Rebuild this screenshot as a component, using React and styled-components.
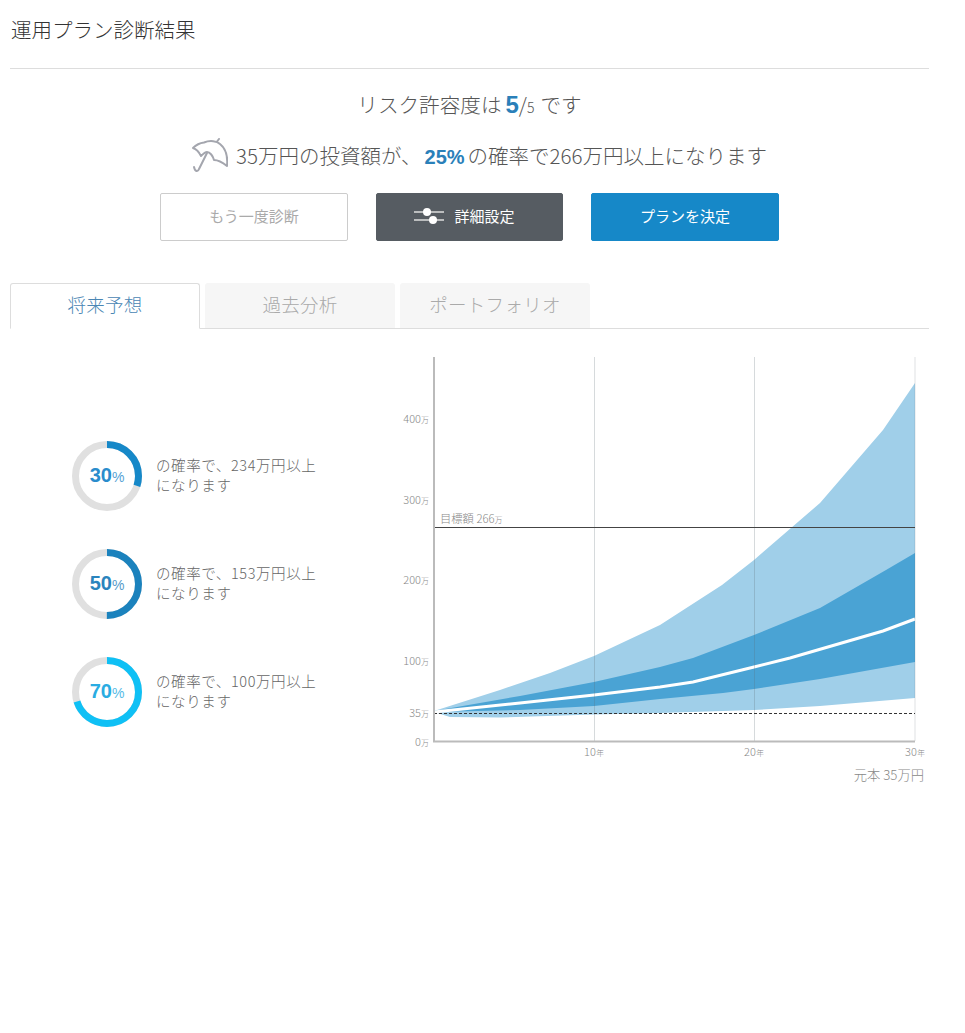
import React from 'react'
import styled, { createGlobalStyle } from 'styled-components'

const GlobalStyle = createGlobalStyle`
    body {
        margin: 0;
        background: #fff;
        font-family: 'Noto Sans CJK JP', 'Noto Sans', sans-serif;
        font-weight: 300;
        color: #555;
    }
`

const Page = styled.div`
    width: 919px;
    height: 1033px;
    margin-left: 10px;
`

const Title = styled.h1`
    height: 69px;
    margin: 0;
    padding: 16px 0 0 1px;
    box-sizing: border-box;
    border-bottom: 1px solid #ddd;
    font-size: 20.5px;
    line-height: 26px;
    font-weight: 300;
    color: #333;
`

const Lead = styled.p`
    margin: 0;
    height: ${props => props.height}px;
    padding-left: ${props => props.indent || 0}px;
    line-height: ${props => props.height}px;
    font-size: ${props => props.size}px;
    text-align: center;
    color: #555;
    white-space: pre;
`

const Strong = styled.strong`
    margin: 0 ${props => props.gap}px;
    font-family: 'Liberation Sans', sans-serif;
    font-size: ${props => props.size}px;
    font-weight: 700;
    color: #2a80b9;
`

const Slash = styled.span`
    margin-left: -4px;
`

const Small = styled.span`
    margin-right: 6px;
    font-size: 14px;
`

const Umbrella = styled.svg`
    width: 38px;
    height: 38px;
    margin: -3px 8px 0 0;
    vertical-align: middle;
    fill: none;
    stroke: #a4a6ae;
    stroke-width: 2;
    stroke-linecap: round;
    stroke-linejoin: round;
`

const Buttons = styled.div`
    display: flex;
    justify-content: center;
    gap: 28px;
    margin: 23px 0 42px;
`

const Button = styled.button`
    display: flex;
    align-items: center;
    justify-content: center;
    gap: 10px;
    width: ${props => props.width || 188}px;
    height: 48px;
    padding: 0 ${props => props.shift || 0}px 3px 0;
    font-family: inherit;
    font-size: 15px;
    font-weight: 400;
    border-radius: 2px;
    border: 1px solid ${props => props.border};
    background: ${props => props.bg};
    color: ${props => props.color};
`

const Tabs = styled.div`
    display: flex;
    gap: 5px;
    height: 45px;
    border-bottom: 1px solid #ddd;
`

const Tab = styled.div`
    width: 190px;
    height: ${props => (props.active ? '46px' : '45px')};
    box-sizing: border-box;
    display: flex;
    align-items: center;
    justify-content: center;
    padding-bottom: 4px;
    font-size: 18.5px;
    letter-spacing: 0.3px;
    border-radius: 3px 3px 0 0;
    color: ${props => (props.active ? '#4a86b4' : '#aaa')};
    background: ${props => (props.active ? '#fff' : '#f6f6f6')};
    border: ${props => (props.active ? '1px solid #ddd' : 'none')};
    border-bottom: ${props => (props.active ? '1px solid #fff' : 'none')};
    position: relative;
`

const Body = styled.div`
    display: flex;
    padding-top: 24px;
`

const Odds = styled.div`
    display: flex;
    flex-direction: column;
    gap: 38px;
    width: 360px;
    padding: 88px 0 0 62px;
    box-sizing: border-box;
`

const OddsRow = styled.div`
    display: flex;
    align-items: center;
    gap: 14px;
`

const Ring = styled.div`
    position: relative;
    width: 70px;
    height: 70px;
`

const RingValue = styled.div`
    position: absolute;
    inset: 0;
    display: flex;
    align-items: center;
    justify-content: center;
    padding-bottom: 2px;
    font-family: 'Liberation Sans', sans-serif;
    font-size: 20px;
    font-weight: 700;
    color: ${props => props.color};
    span {
        font-size: 14px;
        font-weight: 400;
        margin-top: 3px;
        opacity: 0.8;
    }
`

const OddsText = styled.div`
    margin-top: -2px;
    font-size: 14.5px;
    line-height: 20px;
    letter-spacing: 0.6px;
    color: #666;
    white-space: nowrap;
`

const Chart = styled.svg`
    display: block;
    width: 559px;
    height: 450px;
    text {
        font-family: 'Noto Sans CJK JP', sans-serif;
        font-weight: 300;
        fill: #888;
    }
`

const odds = [
    { pct: 30, amount: 234, color: '#1688c8', text: '#2a8ccc' },
    { pct: 50, amount: 153, color: '#1b82bd', text: '#2a84bd' },
    { pct: 70, amount: 100, color: '#0fc0f5', text: '#2aace2' },
]

// chart coordinates are page pixels shifted by the svg origin
const ox = 370
const oy = 353
const pts = list => list.map(([x, y]) => `${x - ox},${y - oy}`).join(' ')

const outerTop = [[434, 711], [500, 690], [550, 673], [594, 656], [660, 625], [722, 585], [754, 560], [820, 503], [883, 430], [915, 383]]
const innerTop = [[434, 711], [520, 696], [594, 682], [660, 667], [693, 658], [754, 635], [820, 608], [886, 570], [915, 553]]
const median = [[434, 712], [520, 703], [594, 695], [660, 687], [693, 682], [754, 667], [790, 658], [883, 631], [915, 619]]
const innerBottom = [[434, 712], [520, 710], [594, 706], [660, 699], [723, 693], [754, 689], [820, 679], [915, 662]]
const outerBottom = [[434, 712], [450, 717], [500, 717.5], [594, 714.5], [660, 713], [754, 710], [820, 706], [915, 698]]

const yLabels = [
    { v: '400', y: 423 },
    { v: '300', y: 504 },
    { v: '200', y: 584 },
    { v: '100', y: 665 },
    { v: '35', y: 717 },
    { v: '0', y: 746 },
]

const xLabels = [
    { v: '10', x: 594 },
    { v: '20', x: 754 },
    { v: '30', x: 915 },
]

const DonutSvg = ({ pct, color }) => {
    const r = 31.5
    const c = 2 * Math.PI * r
    return (
        <svg width="70" height="70" viewBox="0 0 70 70">
            <circle cx="35" cy="35" r={r} fill="none" stroke="#e0e0e0" strokeWidth="7" />
            <circle
                cx="35"
                cy="35"
                r={r}
                fill="none"
                stroke={color}
                strokeWidth="7"
                strokeDasharray={`${(c * pct) / 100} ${c}`}
                transform="rotate(-90 35 35)"
            />
        </svg>
    )
}

const ForecastChart = () => (
    <Chart viewBox="0 0 559 450">
        <polygon points={pts([...outerTop, ...[...outerBottom].reverse()])} fill="#a0cfe9" />
        <polygon points={pts([...innerTop, ...[...innerBottom].reverse()])} fill="#4aa3d4" />
        <polyline points={pts(median)} fill="none" stroke="#fff" strokeWidth="3" />
        <line x1={594.5 - ox} x2={594.5 - ox} y1={4} y2={388} stroke="#5a6a75" strokeOpacity="0.25" />
        <line x1={754.5 - ox} x2={754.5 - ox} y1={4} y2={388} stroke="#5a6a75" strokeOpacity="0.25" />
        <line x1={915 - ox} x2={915 - ox} y1={4} y2={388} stroke="#5a6a75" strokeOpacity="0.2" />
        <line x1={434 - ox} x2={915 - ox} y1={527.5 - oy} y2={527.5 - oy} stroke="#444" />
        <line x1={434 - ox} x2={915 - ox} y1={713.5 - oy} y2={713.5 - oy} stroke="#333" strokeDasharray="3 2" />
        <line x1={434 - ox} x2={434 - ox} y1={4} y2={389} stroke="#bbb" strokeWidth="2" />
        <line x1={433 - ox} x2={915 - ox} y1={741.5 - oy} y2={741.5 - oy} stroke="#bbb" strokeWidth="2" />
        {yLabels.map(l => (
            <text key={l.v} x={429 - ox} y={l.y - oy} textAnchor="end" fontSize="11">
                {l.v}
                <tspan fontSize="8">万</tspan>
            </text>
        ))}
        {xLabels.map(l => (
            <text key={l.v} x={l.x - ox} y={756 - oy} textAnchor="middle" fontSize="11">
                {l.v}
                <tspan fontSize="8">年</tspan>
            </text>
        ))}
        <text x={440 - ox} y={523 - oy} fontSize="11.3">
            目標額 266
            <tspan fontSize="8">万</tspan>
        </text>
        <text x={924 - ox} y={780 - oy} textAnchor="end" fontSize="13.3">
            元本 35万円
        </text>
    </Chart>
)

const App = () => (
    <Page>
        <GlobalStyle />
        <Title>運用プラン診断結果</Title>
        <Lead height={71} size={20.6}>
            リスク許容度は<Strong size={24} gap={4}>5</Strong><Slash>/</Slash><Small>5</Small>です
        </Lead>
        <Lead height={30} size={20.5} indent={18}>
            <Umbrella viewBox="0 0 38 38">
                <path d="M3 10 C7 6 10 5 14 4.5 C20 2 27 3 30 6 C35 10 38 18 37 28 C32 24 28 22 24 22 C23 18 20 14 17 14 C15 14 13 16 11 18 C9 14 6 11 3 10 Z" />
                <path d="M27 3.5 L29 1" />
                <path d="M17 15 L9 31 C8 34 5 34 4 29" />
            </Umbrella>
            35万円の投資額が、<Strong size={20} gap={3}>25%</Strong>の確率で266万円以上になります
        </Lead>
        <Buttons>
            <Button border="#ccc" bg="#fff" color="#aaa">もう一度診断</Button>
            <Button width={187} shift={10} border="#565c62" bg="#565c62" color="#fff">
                <svg width="30" height="18" viewBox="0 0 30 18">
                    <path d="M0 5H30M0 13H30" stroke="#ddd" strokeWidth="1.5" />
                    <circle cx="13" cy="5" r="4" fill="#fff" />
                    <circle cx="19" cy="13" r="4" fill="#fff" />
                </svg>
                詳細設定
            </Button>
            <Button border="#1688c8" bg="#1688c8" color="#fff">プランを決定</Button>
        </Buttons>
        <Tabs>
            <Tab active>将来予想</Tab>
            <Tab>過去分析</Tab>
            <Tab>ポートフォリオ</Tab>
        </Tabs>
        <Body>
            <Odds>
                {odds.map(o => (
                    <OddsRow key={o.pct}>
                        <Ring>
                            <DonutSvg pct={o.pct} color={o.color} />
                            <RingValue color={o.text}>
                                {o.pct}
                                <span>%</span>
                            </RingValue>
                        </Ring>
                        <OddsText>
                            の確率で、{o.amount}万円以上
                            <br />
                            になります
                        </OddsText>
                    </OddsRow>
                ))}
            </Odds>
            <ForecastChart />
        </Body>
    </Page>
)

export default App
